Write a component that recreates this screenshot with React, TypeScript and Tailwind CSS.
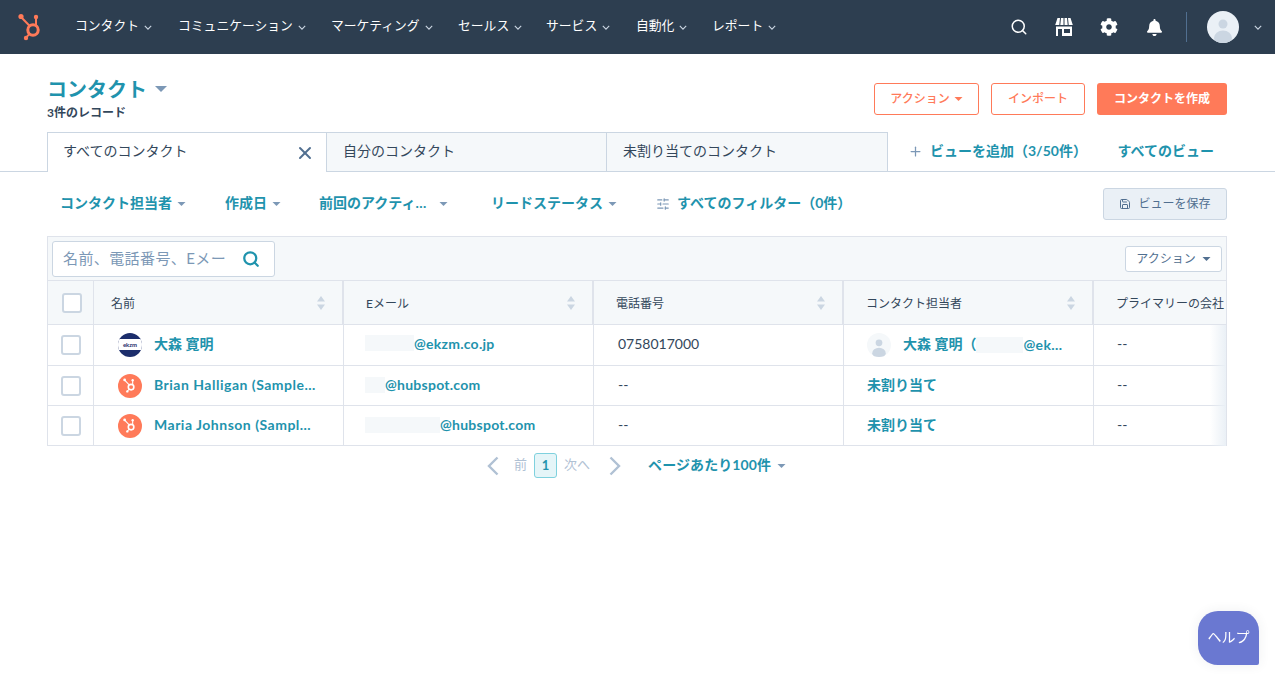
import React from "react";
import { Plus, X, Search, Save, SlidersHorizontal } from "lucide-react";
import { FaBell, FaCog } from "react-icons/fa";

const font = "font-['Lato','Noto_Sans_CJK_JP',sans-serif]";

const navItems = [
  { label: "コンタクト", w: "w-[103px]" },
  { label: "コミュニケーション", w: "w-[153px]" },
  { label: "マーケティング", w: "w-[127px]" },
  { label: "セールス", w: "w-[88px]" },
  { label: "サービス", w: "w-[90px]" },
  { label: "自動化", w: "w-[76px]" },
  { label: "レポート", w: "w-[90px]" },
];

const Chevron = ({ className = "" }: { className?: string }) => (
  <svg viewBox="0 0 10 6" className={`h-[5px] w-[8px] ${className}`} fill="none" stroke="currentColor" strokeWidth="1.4">
    <path d="M1 1l4 4 4-4" />
  </svg>
);

const Caret = ({ className = "" }: { className?: string }) => (
  <svg viewBox="0 0 8 4" className={`h-[4px] w-[9px] ${className}`} fill="currentColor">
    <path d="M0 0h8L4 4z" />
  </svg>
);

const Sprocket = ({ className = "", color = "#ff7a59" }: { className?: string; color?: string }) => (
  <svg viewBox="0 0 26 28" className={className} fill="none" stroke={color}>
    <circle cx="15" cy="17" r="5.2" strokeWidth="3" />
    <path d="M18 12V5" strokeWidth="2" />
    <circle cx="18" cy="4" r="2.2" fill={color} stroke="none" />
    <path d="M11.5 12.8L3.5 4.5" strokeWidth="2" />
    <circle cx="3" cy="3.5" r="2.6" fill={color} stroke="none" />
    <path d="M11.5 21l-3.5 3.6" strokeWidth="2" />
    <circle cx="8" cy="25" r="2.2" fill={color} stroke="none" />
  </svg>
);

const Store = () => (
  <svg viewBox="0 0 18 18" className="h-[18px] w-[18px]" fill="#fff">
    <path d="M2.500 0H5L4.300 7H0.200zM6 0h2.500V7H5.300zM9.500 0H12l.7 7H9.500zM13 0h2.500l2.300 7h-4.100z" />
    <path fillRule="evenodd" d="M1 8.500h16V18H1zM3 11v7h4v-7zM9 11v4h6v-4z" />
  </svg>
);

const Avatar = ({ className, bg, head, body }: { className: string; bg: string; head: string; body: string }) => (
  <div className={`${className} overflow-hidden rounded-full`} style={{ background: bg }}>
    <svg viewBox="0 0 32 32" className="h-full w-full">
      <circle cx="16" cy="13" r="4.500" fill={head} />
      <ellipse cx="16" cy="27" rx="9" ry="7.500" fill={body} />
    </svg>
  </div>
);

const Check = () => <div className="h-5 w-5 rounded-[3px] border-2 border-[#cbd6e2] bg-white" />;

const Sort = () => (
  <svg viewBox="0 0 8 14" className="h-[14px] w-[8px]" fill="#cbd6e2">
    <path d="M4 0l4 5.500H0zM4 14L0 8.500h8z" />
  </svg>
);

const PageArrow = ({ dir }: { dir: "l" | "r" }) => (
  <svg viewBox="0 0 12 20" className="h-[20px] w-[12px]" fill="none" stroke="#b0c1d4" strokeWidth="2.400">
    <path d={dir === "l" ? "M10.500 1.500L2 10l8.500 8.500" : "M1.500 1.500L10 10l-8.500 8.500"} />
  </svg>
);

const Hidden = ({ w }: { w: string }) => <span className={`inline-block h-4 ${w} bg-[#f5f8fa]`} />;

const HeadCell = ({ label }: { label: string }) => (
  <div className="flex w-[250px] shrink-0 items-center justify-between border-r-2 border-[#dfe3eb] pl-[22px] pr-[17px] text-[12px] text-[#33475b]">
    <span className="whitespace-nowrap pt-[2px]">{label}</span>
    <Sort />
  </div>
);

const FilterBtn = ({ label, w }: { label: string; w: string }) => (
  <div className={`flex ${w} items-center text-[14px] font-bold text-[#1f93ad]`}>
    <span className="whitespace-nowrap pb-[4px]">{label}</span>
    <Caret className="ml-[5px] text-[#7c98b6]" />
  </div>
);

const Row = ({ name, avatar, email, phone, owner, rowH, textPb }: {
  name: React.ReactNode;
  avatar: React.ReactNode;
  email: React.ReactNode;
  phone: string;
  owner: React.ReactNode;
  rowH: string;
  textPb: string;
}) => (
  <div className={`flex ${rowH} border-b border-[#dfe3eb] text-[14px]`}>
    <div className="flex w-[46px] shrink-0 items-center justify-center border-r border-[#dfe3eb] pl-[1px]">
      <Check />
    </div>
    <div className="flex w-[250px] shrink-0 items-center gap-[12px] border-r border-[#dfe3eb] pl-[24px]">
      {avatar}
      <span className={`whitespace-nowrap font-bold text-[#1f93ad] ${textPb}`}>{name}</span>
    </div>
    <div className={`flex w-[250px] shrink-0 items-center border-r border-[#dfe3eb] pl-[21px] font-bold tracking-[0.25px] text-[#1f93ad] ${textPb}`}>
      {email}
    </div>
    <div className={`flex w-[250px] shrink-0 items-center border-r border-[#dfe3eb] pl-[24px] text-[#33475b] ${textPb}`}>
      {phone}
    </div>
    <div className="flex w-[250px] shrink-0 items-center border-r border-[#dfe3eb] pl-[24px]">{owner}</div>
    <div className={`flex flex-1 items-center pl-[23px] text-[#33475b] ${textPb}`}>--</div>
  </div>
);

const SprocketAvatar = () => (
  <div className="flex h-6 w-6 shrink-0 items-center justify-center rounded-full bg-[#ff7a59]">
    <Sprocket className="h-[15px] w-[14px]" color="#fff" />
  </div>
);

const EkzmAvatar = () => (
  <div className="flex h-6 w-6 shrink-0 flex-col overflow-hidden rounded-full bg-[#1c2d6b]">
    <div className="h-[6px]" />
    <div className="flex h-[11px] items-center justify-center bg-white text-[6px] font-bold leading-none text-[#1c2d6b]">ekzm</div>
  </div>
);

const Unassigned = () => <span className="-ml-px pb-[2px] font-bold text-[#1f93ad]">未割り当て</span>;

export default function App() {
  return (
    <div className={`relative min-h-[681px] w-full overflow-hidden bg-white ${font}`}>
      <header className="flex h-[54px] items-center bg-[#2d3e50] text-white">
        <div className="ml-[18px] w-[57px]">
          <Sprocket className="h-[28px] w-[26px]" />
        </div>
        <nav className="flex">
          {navItems.map((n) => (
            <div key={n.label} className={`flex ${n.w} items-center text-[12.800px]`}>
              <span className="whitespace-nowrap pb-[2px]">{n.label}</span>
              <Chevron className="ml-[5px] text-[#cbd6e2]" />
            </div>
          ))}
        </nav>
        <div className="ml-auto flex items-center pr-[13px]">
          <Search size={18} strokeWidth={2} className="mr-[27px]" />
          <Store />
          <FaCog size={18} className="ml-[27px]" />
          <FaBell size={17} className="ml-[28px]" />
          <div className="ml-[23px] h-[30px] w-px bg-[#516f90]" />
          <Avatar className="ml-[20px] h-8 w-8" bg="#eaf0f6" head="#cbd6e2" body="#cbd6e2" />
          <Chevron className="ml-[15px] text-[#cbd6e2]" />
        </div>
      </header>

      <div className="flex h-[78px] items-start justify-between pl-[47px] pr-[48px]">
        <div className="pt-[21px]">
          <div className="flex items-center">
            <h1 className="text-[20px] leading-[28px] font-bold text-[#1f93ad]">コンタクト</h1>
            <Caret className="ml-[8px] h-[6px] w-[12px] text-[#7c98b6]" />
          </div>
          <p className="mt-[2px] text-[12px] leading-[16px] font-bold text-[#33475b]">3件のレコード</p>
        </div>
        <div className="flex gap-[12px] pt-[29px]">
          <div className="flex h-8 w-[105px] items-center justify-center gap-[4px] rounded-[3px] border border-[#ff7a59] text-[12px] font-medium text-[#ff7a59]">
            アクション
            <Caret className="h-[3px] w-[7px]" />
          </div>
          <div className="flex h-8 w-[94px] items-center justify-center rounded-[3px] border border-[#ff7a59] text-[12px] font-medium text-[#ff7a59]">
            インポート
          </div>
          <div className="flex h-8 w-[130px] items-center justify-center rounded-[3px] bg-[#ff7a59] text-[12px] font-bold text-white">
            コンタクトを作成
          </div>
        </div>
      </div>

      <div className="flex h-[40px] border-b border-[#cbd6e2] pl-[47px] pr-[61px] text-[14px] text-[#33475b]">
        <div className="-mb-px flex w-[280px] items-center justify-between border-x border-t border-[#cbd6e2] bg-white pl-[15px] pr-[11px]">
          <span className="pb-[5px]">すべてのコンタクト</span>
          <X size={20} strokeWidth={2.400} className="text-[#516f90]" />
        </div>
        <div className="flex w-[280px] items-center border-r border-t border-[#cbd6e2] bg-[#f5f8fa] pb-[4px] pl-[16px]">自分のコンタクト</div>
        <div className="flex w-[281px] items-center border-r border-t border-[#cbd6e2] bg-[#f5f8fa] pb-[4px] pl-[16px]">未割り当てのコンタクト</div>
        <div className="flex items-center pl-[20px] font-bold text-[#1f93ad]">
          <Plus size={15} strokeWidth={2} className="mr-[7px] text-[#7c98b6]" />
          <span className="pb-[2px]">ビューを追加（3/50件）</span>
        </div>
        <div className="ml-auto flex items-center pb-[2px] font-bold text-[#1f93ad]">すべてのビュー</div>
      </div>

      <div className="flex h-[64px] items-center pl-[60px] pr-[48px]">
        <FilterBtn label="コンタクト担当者" w="w-[165px]" />
        <FilterBtn label="作成日" w="w-[94px]" />
        <div className="flex w-[172px] items-center text-[14px] font-bold text-[#1f93ad]">
          <span className="whitespace-nowrap pb-[4px]">前回のアクティ…</span>
          <Caret className="ml-[13px] text-[#7c98b6]" />
        </div>
        <FilterBtn label="リードステータス" w="w-[165px]" />
        <SlidersHorizontal size={14} className="mr-[7px] text-[#7c98b6]" />
        <span className="pb-[4px] text-[14px] font-bold text-[#1f93ad]">すべてのフィルター（0件）</span>
        <div className="ml-auto flex h-8 w-[124px] items-center justify-center gap-[7px] rounded-[3px] border border-[#cbd6e2] bg-[#eaf0f6] text-[12px] text-[#516f90]">
          <Save size={12} />
          <span className="pb-[1px]">ビューを保存</span>
        </div>
      </div>

      <div className="relative ml-[47px] mr-[48px] border-x border-t border-[#dfe3eb]">
        <div className="flex h-[44px] items-center justify-between border-b border-[#dfe3eb] bg-[#f5f8fa] px-[4px]">
          <div className="flex h-9 w-[223px] items-center justify-between rounded-[3px] border border-[#cbd6e2] bg-white pl-[10px] pr-[14px] text-[15px] text-[#7c98b6]">
            <span className="whitespace-nowrap pb-[1px] tracking-[0.4px]">名前、電話番号、Eメー</span>
            <Search size={18} strokeWidth={3} className="text-[#1f93ad]" />
          </div>
          <div className="flex h-[26px] w-[97px] items-center justify-center gap-[6px] rounded-[3px] border border-[#cbd6e2] bg-white text-[12px] text-[#516f90]">
            アクション
            <Caret className="h-[3px] w-[7px] text-[#516f90]" />
          </div>
        </div>
        <div className="flex h-[44px] border-b border-[#dfe3eb] bg-[#f5f8fa]">
          <div className="flex w-[46px] shrink-0 items-center justify-center border-r border-[#dfe3eb] pl-[3px]">
            <Check />
          </div>
          <div className="flex w-[250px] shrink-0 items-center justify-between border-r-2 border-[#dfe3eb] pl-[17px] pr-[17px] text-[12px] text-[#33475b]">
            <span className="pt-[2px]">名前</span>
            <Sort />
          </div>
          <HeadCell label="Eメール" />
          <HeadCell label="電話番号" />
          <HeadCell label="コンタクト担当者" />
          <div className="flex flex-1 items-center overflow-hidden whitespace-nowrap pl-[22px] pt-[2px] text-[12px] text-[#33475b]">プライマリーの会社</div>
        </div>
        <Row
          rowH="h-[41px]"
          textPb="pb-[4px]"
          name="大森 寛明"
          avatar={<EkzmAvatar />}
          email={<><Hidden w="w-[49px]" />@ekzm.co.jp</>}
          phone="0758017000"
          owner={
            <div className="-ml-px flex items-center font-bold text-[#1f93ad]">
              <Avatar className="h-6 w-6" bg="#f5f8fa" head="#cbd6e2" body="#cbd6e2" />
              <span className="ml-[12px] whitespace-nowrap pb-[4px]">大森 寛明（</span>
              <Hidden w="w-[47px]" />
              <span className="pb-[2px] tracking-[0.4px]">@ek…</span>
            </div>
          }
        />
        <Row
          rowH="h-[40px]"
          textPb="pb-[2px]"
          name={<span className="tracking-[0.5px]">Brian Halligan (Sample…</span>}
          avatar={<SprocketAvatar />}
          email={<><Hidden w="w-[20px]" />@hubspot.com</>}
          phone="--"
          owner={<Unassigned />}
        />
        <Row
          rowH="h-[40px]"
          textPb="pb-[2px]"
          name={<span className="tracking-[0.5px]">Maria Johnson (Sampl…</span>}
          avatar={<SprocketAvatar />}
          email={<><Hidden w="w-[75px]" />@hubspot.com</>}
          phone="--"
          owner={<Unassigned />}
        />
        <div className="absolute bottom-0 right-0 top-[88px] w-[16px] bg-gradient-to-r from-transparent to-[#eaf0f6]" />
      </div>

      <div className="mt-[7px] flex h-[25px] items-center pl-[487px] text-[13px] text-[#b0c1d4]">
        <PageArrow dir="l" />
        <span className="ml-[15px] pb-[2px]">前</span>
        <div className="ml-[7px] flex h-[25px] w-[23px] items-center justify-center rounded-[3px] border border-[#7fd1de] bg-[#e5f5f8] text-[13px] font-bold text-[#1f93ad]">1</div>
        <span className="ml-[7px] pb-[2px]">次へ</span>
        <div className="ml-[19px]"><PageArrow dir="r" /></div>
        <span className="ml-[27px] whitespace-nowrap pb-[2px] text-[14px] font-bold tracking-[0.1px] text-[#1f93ad]">ページあたり100件</span>
        <Caret className="ml-[6px] text-[#7c98b6]" />
      </div>

      <div className="fixed bottom-[16px] right-[16px] flex h-[54px] w-[61px] items-center justify-center rounded-bl-[20px] rounded-br-[2px] rounded-tl-[20px] rounded-tr-[20px] bg-[#6a78d1] pb-[3px] text-[14px] text-white shadow-[0_0_12px_rgba(45,62,80,0.08)]">
        ヘルプ
      </div>
    </div>
  );
}
